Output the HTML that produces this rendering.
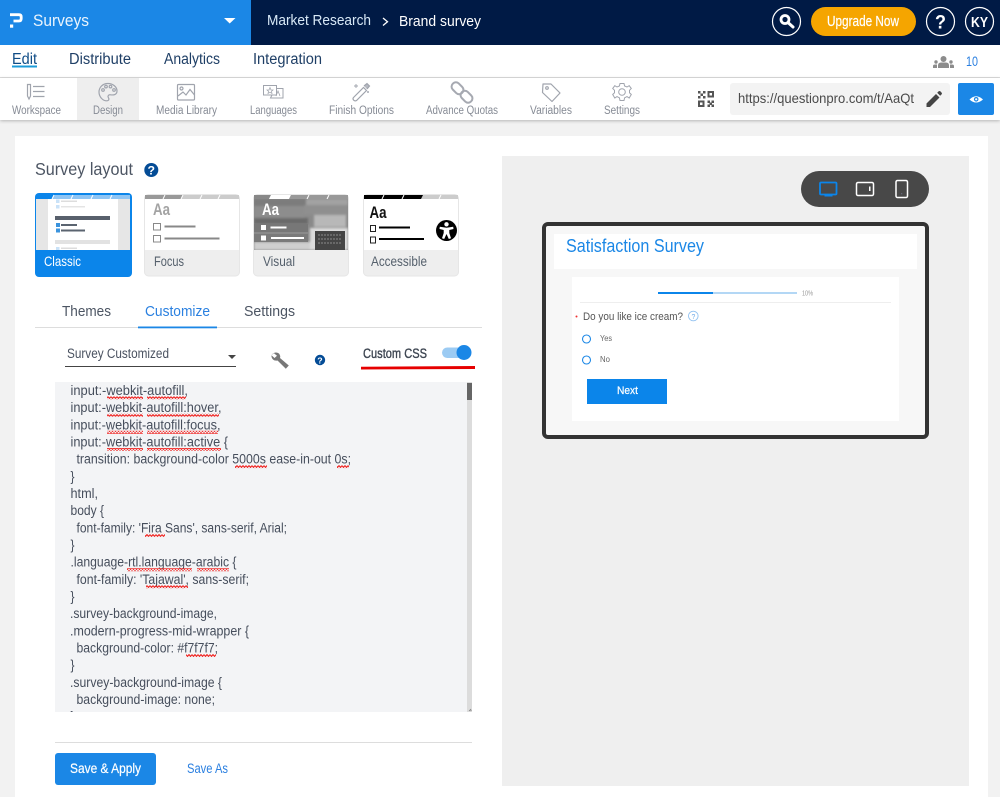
<!DOCTYPE html>
<html><head><meta charset="utf-8"><title>Surveys</title>
<style>
html,body{margin:0;padding:0;width:1000px;height:797px;overflow:hidden;background:#f2f2f2}
svg{display:block}
text{font-family:"Liberation Sans",sans-serif;white-space:pre}
.c text{font-size:13.5px;fill:#464e5c}
.t text{font-size:11.5px;fill:#868b95}
.i{fill:none;stroke:#a0a4ad;stroke-width:1.2}
</style></head><body>
<svg xmlns="http://www.w3.org/2000/svg" width="1000" height="797" viewBox="0 0 1000 797">
<defs>
<pattern id="w" width="6" height="3" patternUnits="userSpaceOnUse"><path d="M0 .6L1.5 2.4L3 .6L4.5 2.4L6 .6" fill="none" stroke="#f0221f" stroke-width="1.1"/></pattern>
<filter id="s" x="-5%" y="-20%" width="110%" height="150%"><feDropShadow dx="0" dy="1" stdDeviation="1.5" flood-color="#000" flood-opacity=".25"/></filter>
<filter id="b" x="-5%" y="-5%" width="110%" height="110%"><feGaussianBlur stdDeviation="1"/></filter>
<clipPath id="ta"><rect x="55" y="382" width="417" height="330"/></clipPath>
<clipPath id="vis"><rect x="254" y="199" width="94" height="51"/></clipPath>
</defs>
<rect width="1000" height="797" fill="#f2f2f2"/>
<!-- top bar -->
<rect width="251" height="45" fill="#1b87e6"/>
<rect x="251" width="749" height="45" fill="#001a45"/>
<path d="M10 14.700H19Q21.200 14.700 21.200 17V18.500Q21.200 21 19 21H13.500" fill="none" stroke="#fff" stroke-width="2.800"/>
<rect x="10" y="24.500" width="3.200" height="3.200" fill="#fff"/>
<text x="33" y="26" font-size="17" fill="#eaf4fd" textLength="56" lengthAdjust="spacingAndGlyphs">Surveys</text>
<path d="M224 18H235.500L229.700 23.500Z" fill="#fff"/>
<text x="267" y="25" font-size="15" fill="#d7e8f6" textLength="104" lengthAdjust="spacingAndGlyphs">Market Research</text>
<path d="M383 18L387.500 21.700L383 25.500" fill="none" stroke="#fff" stroke-width="1.300"/>
<text x="399" y="26" font-size="15" fill="#fff" textLength="82" lengthAdjust="spacingAndGlyphs">Brand survey</text>
<circle cx="786.500" cy="21.500" r="14" fill="none" stroke="#fff" stroke-width="1.200"/>
<circle cx="785" cy="19.500" r="4" fill="none" stroke="#fff" stroke-width="2.800"/>
<path d="M788.500 23L793 27" stroke="#fff" stroke-width="3" stroke-linecap="round"/>
<rect x="811" y="7" width="105" height="29" rx="14.500" fill="#f5a500"/>
<text x="827" y="26" font-size="14.500" fill="#fff" stroke="#fff" stroke-width=".2" textLength="72" lengthAdjust="spacingAndGlyphs">Upgrade Now</text>
<circle cx="940.500" cy="21.500" r="14" fill="none" stroke="#fff" stroke-width="1.200"/>
<text x="935" y="28.500" font-size="19" font-weight="700" fill="#fff" textLength="11" lengthAdjust="spacingAndGlyphs">?</text>
<circle cx="979.500" cy="21.500" r="14" fill="none" stroke="#fff" stroke-width="1.200"/>
<text x="971" y="27" font-size="15" font-weight="700" fill="#fff" textLength="17" lengthAdjust="spacingAndGlyphs">KY</text>
<!-- nav -->
<rect y="45" width="1000" height="32" fill="#fff"/>
<g font-size="15.500" fill="#1f3f66">
<text x="12" y="64" fill="#0f4c86" textLength="25" lengthAdjust="spacingAndGlyphs">Edit</text>
<text x="69" y="64" textLength="62" lengthAdjust="spacingAndGlyphs">Distribute</text>
<text x="164" y="64" textLength="56" lengthAdjust="spacingAndGlyphs">Analytics</text>
<text x="253" y="64" textLength="69" lengthAdjust="spacingAndGlyphs">Integration</text>
</g>
<rect x="12" y="65.500" width="25" height="2" fill="#1b9bd8"/>
<g fill="#8c8c8c">
<circle cx="943.500" cy="59" r="3"/><path d="M938 68V65.500Q938 62.500 941 62.500H946Q949 62.500 949 65.500V68Z"/>
<circle cx="936" cy="62" r="1.700"/><path d="M933 68V66Q933 64.500 935 64.500H937V68Z"/>
<circle cx="951" cy="62" r="1.700"/><path d="M954 68V66Q954 64.500 952 64.500H950V68Z"/>
</g>
<text x="966" y="66" font-size="13.500" fill="#2a7fe0" textLength="12" lengthAdjust="spacingAndGlyphs">10</text>
<rect y="77" width="1000" height="1.200" fill="#dcdcdc"/>
<!-- toolbar -->
<rect y="78" width="1000" height="42" fill="#fff" filter="url(#s)"/>
<rect x="77" y="78" width="62" height="42" fill="#eee"/>
<g class="t">
<text x="12" y="114" textLength="49" lengthAdjust="spacingAndGlyphs">Workspace</text>
<text x="93" y="114" textLength="30" lengthAdjust="spacingAndGlyphs">Design</text>
<text x="156" y="114" textLength="61" lengthAdjust="spacingAndGlyphs">Media Library</text>
<text x="250" y="114" textLength="47" lengthAdjust="spacingAndGlyphs">Languages</text>
<text x="329" y="114" textLength="65" lengthAdjust="spacingAndGlyphs">Finish Options</text>
<text x="426" y="114" textLength="72" lengthAdjust="spacingAndGlyphs">Advance Quotas</text>
<text x="530" y="114" textLength="42" lengthAdjust="spacingAndGlyphs">Variables</text>
<text x="604" y="114" textLength="36" lengthAdjust="spacingAndGlyphs">Settings</text>
</g>
<g class="i">
<path d="M27.500 84.500H30.500V96L29 99L27.500 96Z"/><path d="M33 86.500H44.500M33 91.500H44.500M33 96.500H44.500"/>
<path d="M108 83.500C102 83.500 99 88 99 92C99 97 103 101 107 100.800C109.500 100.600 109 98.500 108.300 97.500C107.500 96 108.500 94.500 110.500 94.800C114 95.300 117 94.500 117 91C117 87 113 83.500 108 83.500Z"/>
<circle cx="103" cy="90" r="1.300"/><circle cx="106" cy="86.600" r="1.300"/><circle cx="110.500" cy="86.600" r="1.300"/><circle cx="114" cy="90" r="1.300"/>
<rect x="177.500" y="84.500" width="17" height="15.500" rx="1"/><circle cx="181.500" cy="88.500" r="1.500"/><path d="M178 96L183 92L186 95L190 89.500L194.500 95"/>
<path d="M263.500 85.500H276.500V95H263.500Z" stroke-width="1"/><path d="M276.500 88.500H283V98H270.500L272 95" stroke-width="1"/><path d="M270 87.500L271 90H273L271.500 91.300L272 93.500L270 92.200L268 93.500L268.500 91.300L267 90H269Z" stroke-width=".7"/><path d="M276 96L278 91L280 96" stroke-width=".8"/>
<path d="M353.500 97.500L363.500 87.500L366.500 90.500L356.500 100.500Q355 101.500 353.500 100Q352.500 98.500 353.500 97.500Z"/><path d="M364 86L367 83.500L369.500 86L367 89" fill="#b5b8c0"/><path d="M356 84V88M354 86H358M368 91V93M367 92H369" stroke-width=".9"/>
<rect x="451" y="84" width="13" height="8.500" rx="4" transform="rotate(45 457.500 88.250)" stroke="#a6a9b1" stroke-width="2"/>
<rect x="460" y="92.500" width="13" height="8.500" rx="4" transform="rotate(45 466.500 96.750)" stroke="#a6a9b1" stroke-width="2"/>
<path d="M543 84H551L560 93L552 101.500L542.500 92.500Z" stroke-linejoin="round"/><circle cx="547" cy="88" r="1.300"/>
<path d="M620 83.500H624L624.600 86L627 87L629.200 85.700L631.300 88.500L629.500 90.300V92.800L631.300 94.500L629.200 98L627 96.600L624.600 97.800L624 100.500H620L619.400 97.800L617 96.600L614.800 98L612.700 94.500L614.500 92.800V90.300L612.700 88.500L614.800 85.700L617 87L619.400 86Z" stroke-width="1"/><circle cx="622" cy="92" r="3.300" stroke-width="1"/>
</g>
<!-- QR -->
<g fill="#555">
<rect x="698" y="91" width="2.500" height="2.500"/><rect x="703" y="91" width="2.500" height="2.500"/><rect x="700.500" y="93.500" width="2.500" height="2.500"/><rect x="698" y="96" width="2.500" height="2.500"/><rect x="703" y="96" width="2.500" height="2.500"/>
<path fill-rule="evenodd" d="M707.500 91H714V97.500H707.500ZM709.500 93V95.500H712V93Z"/>
<path fill-rule="evenodd" d="M698 100.500H704.500V107H698ZM700 102.500V105H702.500V102.500Z"/>
<rect x="707.500" y="100.500" width="2.500" height="2.500"/><rect x="711.500" y="100.500" width="2.500" height="2.500"/><rect x="709.500" y="102.500" width="2.500" height="2.500"/><rect x="707.500" y="104.500" width="2.500" height="2.500"/><rect x="711.500" y="104.500" width="2.500" height="2.500"/>
</g>
<rect x="730" y="83" width="220" height="32" rx="3" fill="#f3f3f3"/>
<text x="738" y="103" font-size="14" fill="#4a4a4a" textLength="176" lengthAdjust="spacingAndGlyphs">https://questionpro.com/t/AaQt</text>
<path d="M926.500 107V103.500L936 94L939.500 97.500L930 107ZM937.200 92.800L938.700 91.300Q939.500 90.700 940.300 91.300L941.700 92.700Q942.300 93.500 941.700 94.300L940.200 95.800Z" fill="#444"/>
<rect x="958" y="83" width="36" height="32" rx="2" fill="#1b87e6"/>
<path d="M969.500 99.500Q976 93 983 99.500Q976 105.500 969.500 99.500Z" fill="#fff"/><circle cx="976.200" cy="99.300" r="2.300" fill="#1b87e6"/><circle cx="976.200" cy="99.300" r="1.100" fill="#fff"/>
<!-- panel -->
<rect x="15" y="136" width="973" height="661" fill="#fff"/>
<rect x="502" y="156" width="467" height="630" fill="#efefef"/>
<text x="35" y="175" font-size="17.500" fill="#4c5563" textLength="98" lengthAdjust="spacingAndGlyphs">Survey layout</text>
<circle cx="151.300" cy="170" r="7" fill="#044c96"/>
<text x="147.500" y="174.500" font-size="11.500" font-weight="700" fill="#fff" textLength="7.500" lengthAdjust="spacingAndGlyphs">?</text>
<!-- Classic -->
<rect x="35" y="193" width="97" height="84" rx="4" fill="#0b85ea"/>
<rect x="36" y="195" width="94" height="55" fill="#e6e6e6"/>
<rect x="48" y="199" width="70" height="51" fill="#fff"/>
<path d="M36 195H130V199H36Z" fill="#8fc5f4"/>
<path d="M36 195H54L52 199H36Z" fill="#0b85ea"/>
<path d="M52 199L54 195M71 199L73 195M91 199L93 195M110 199L112 195" stroke="#fff" stroke-width="1"/>
<rect x="56" y="199.500" width="3.500" height="3.500" fill="#c9e2f8"/><rect x="61" y="200.500" width="16" height="1.500" fill="#ddd"/>
<rect x="56" y="205" width="3.500" height="3.500" fill="#c9e2f8"/><rect x="61" y="206" width="24" height="1.500" fill="#e4e4e4"/>
<rect x="55" y="216" width="55" height="4" fill="#58606c"/>
<rect x="56" y="223" width="4" height="4" fill="#3a93dd"/><rect x="61" y="224" width="16" height="2" fill="#5b6470"/>
<rect x="56" y="228.500" width="4" height="4" fill="#3a93dd"/><rect x="61" y="229.500" width="24" height="2" fill="#5b6470"/>
<rect x="55" y="240" width="55" height="4" fill="#e2e2e2"/>
<rect x="56" y="247" width="3.500" height="3" fill="#c9e2f8"/><rect x="61" y="247.500" width="16" height="1.500" fill="#ddd"/>
<text x="44" y="266" font-size="14" fill="#fff" textLength="37" lengthAdjust="spacingAndGlyphs">Classic</text>
<!-- Focus -->
<rect x="144.500" y="194.500" width="95" height="81.500" rx="4" fill="#eee" stroke="#e6e6e6"/>
<rect x="145" y="195" width="94" height="55" fill="#fff"/>
<rect x="145" y="195" width="94" height="4" fill="#ccc"/>
<path d="M145 195H183L181 199H145Z" fill="#999"/>
<path d="M163 199L165 195M181 199L183 195M200 199L202 195M218 199L220 195" stroke="#fff" stroke-width="1"/>
<text x="153" y="215" font-size="17" font-weight="700" fill="#a3a3a3" textLength="17" lengthAdjust="spacingAndGlyphs">Aa</text>
<rect x="153.500" y="223.500" width="7" height="6.500" fill="none" stroke="#888"/><rect x="164.500" y="225.500" width="31" height="2" fill="#888"/>
<rect x="153.500" y="235.500" width="7" height="6.500" fill="none" stroke="#888"/><rect x="164.500" y="237.500" width="55" height="2" fill="#888"/>
<text x="154" y="266" font-size="14" fill="#55606c" textLength="30" lengthAdjust="spacingAndGlyphs">Focus</text>
<!-- Visual -->
<rect x="253.500" y="194.500" width="95" height="81.500" rx="4" fill="#eee" stroke="#e6e6e6"/>
<rect x="254" y="195" width="94" height="4" fill="#ccc"/>
<path d="M254 195H271L269 199H254Z" fill="#888"/><path d="M271 195H291L289 199H269Z" fill="#fff"/><path d="M291 195H348V199H289Z" fill="#999"/>
<path d="M307 199L309 195M327 199L329 195" stroke="#fff" stroke-width="1"/>
<g clip-path="url(#vis)">
<rect x="254" y="199" width="94" height="51" fill="#8a8a8a"/>
<g filter="url(#b)">
<rect x="254" y="199" width="52" height="7" fill="#7c7c7c"/>
<rect x="306" y="199" width="42" height="6" fill="#a2a2a2"/>
<rect x="254" y="206" width="50" height="12" fill="#8d8d8d"/>
<rect x="304" y="205" width="44" height="10" fill="#8f8f8f"/>
<rect x="314" y="215" width="32" height="12" fill="#b8b8b8"/>
<rect x="254" y="218" width="54" height="6" fill="#6a6a6a"/>
<rect x="254" y="242" width="56" height="8" fill="#cfcfcf"/>
<rect x="310" y="228" width="38" height="22" fill="#dcdcdc"/>
</g>
<rect x="315" y="231" width="30" height="19" fill="#454545"/>
<path d="M318 235H341M318 239H341M318 243H341" stroke="#8a8a8a" stroke-width="1" stroke-dasharray="2 1"/>
<rect x="254" y="224" width="54" height="8" fill="#777"/>
<rect x="254" y="234" width="54" height="8" fill="#7a7a7a"/>
</g>
<text x="262" y="215" font-size="17" font-weight="700" fill="#fff" textLength="17" lengthAdjust="spacingAndGlyphs">Aa</text>
<rect x="261" y="225" width="5" height="5" fill="#fff"/><rect x="270.500" y="226.500" width="16" height="2" fill="#fff"/>
<rect x="261" y="235.500" width="5" height="5" fill="#fff"/><rect x="271" y="237" width="33" height="2" fill="#fff"/>
<text x="263" y="266" font-size="14" fill="#55606c" textLength="32" lengthAdjust="spacingAndGlyphs">Visual</text>
<!-- Accessible -->
<rect x="363.500" y="194.500" width="95" height="81.500" rx="4" fill="#eee" stroke="#e6e6e6"/>
<rect x="364" y="199" width="94" height="51" fill="#fff"/>
<rect x="364" y="195" width="94" height="4" fill="#ccc"/>
<path d="M364 195H423L421 199H364Z" fill="#000"/>
<path d="M382 199L384 195M402 199L404 195M439 199L441 195" stroke="#fff" stroke-width="1"/>
<text x="369.500" y="218" font-size="16.500" font-weight="700" fill="#111" textLength="17" lengthAdjust="spacingAndGlyphs">Aa</text>
<rect x="370.500" y="225.500" width="5" height="6" fill="none" stroke="#222"/><rect x="379" y="226.500" width="31" height="2" fill="#000"/>
<rect x="370.500" y="237" width="5" height="6" fill="none" stroke="#222"/><rect x="379" y="238" width="45" height="2" fill="#000"/>
<circle cx="446.500" cy="230.500" r="10.500" fill="#000"/>
<circle cx="446.500" cy="224.300" r="2.200" fill="#fff"/>
<path d="M439.800 226.800L446.500 227.800L453.200 226.800L453.500 229L449.300 230V233L451 238.300L448.800 239L446.500 234L444.200 239L442 238.300L443.700 233V230L439.500 229Z" fill="#fff"/>
<text x="371" y="266" font-size="14" fill="#55606c" textLength="56" lengthAdjust="spacingAndGlyphs">Accessible</text>
<!-- tabs -->
<g font-size="15">
<text x="62" y="316" fill="#4c5563" textLength="49" lengthAdjust="spacingAndGlyphs">Themes</text>
<text x="145" y="316" fill="#2a80e0" textLength="65" lengthAdjust="spacingAndGlyphs">Customize</text>
<text x="244" y="316" fill="#4c5563" textLength="51" lengthAdjust="spacingAndGlyphs">Settings</text>
</g>
<rect x="35" y="327" width="447" height="1" fill="#ddd"/>
<rect x="138" y="326.500" width="79" height="1.800" fill="#1b87e6"/>
<!-- select row -->
<text x="67" y="358" font-size="13.500" fill="#4a5260" textLength="102" lengthAdjust="spacingAndGlyphs">Survey Customized</text>
<rect x="65" y="366" width="171" height="1" fill="#444"/>
<path d="M228 355H236L232 359Z" fill="#444"/>
<path d="M271.500 355Q275 351 279 353.500Q280.800 356 280 358L288.800 365.500L285.800 368.800L277.500 360.500Q274.500 361 273 359.500Q271.200 357.500 271.500 355.200L274.500 358L277 355.800L274 353.200Z" fill="#777"/>
<circle cx="320" cy="360" r="5.200" fill="#044c96"/>
<text x="317.300" y="363.300" font-size="8.500" font-weight="700" fill="#fff" textLength="5.400" lengthAdjust="spacingAndGlyphs">?</text>
<text x="363" y="358" font-size="13.500" fill="#3c4450" textLength="64" lengthAdjust="spacingAndGlyphs" stroke="#3c4450" stroke-width=".35">Custom CSS</text>
<rect x="442" y="347.500" width="28" height="10.500" rx="5.200" fill="#9ccbf3"/>
<circle cx="464" cy="352.500" r="7.500" fill="#1b87e6"/>
<path d="M361 366.800L475 366V369L361 369.500Z" fill="#e60000"/>
<!-- code -->
<rect x="55" y="382" width="417" height="330" fill="#f3f4f6"/>
<rect x="467" y="382" width="5" height="330" fill="#dcdcdc"/>
<rect x="467" y="383" width="5" height="17" fill="#666"/>
<g clip-path="url(#ta)">
<g class="c">
<text x="70.500" y="395" textLength="117.500" lengthAdjust="spacingAndGlyphs">input:-webkit-autofill,</text>
<text x="70.500" y="412.200" textLength="151" lengthAdjust="spacingAndGlyphs">input:-webkit-autofill:hover,</text>
<text x="70.500" y="429.300" textLength="150" lengthAdjust="spacingAndGlyphs">input:-webkit-autofill:focus,</text>
<text x="70.500" y="446.500" textLength="157.500" lengthAdjust="spacingAndGlyphs">input:-webkit-autofill:active {</text>
<text x="76.500" y="463.700" textLength="274.500" lengthAdjust="spacingAndGlyphs">transition: background-color 5000s ease-in-out 0s;</text>
<text x="70.500" y="480.900" textLength="4" lengthAdjust="spacingAndGlyphs">}</text>
<text x="70.500" y="498" textLength="27.500" lengthAdjust="spacingAndGlyphs">html,</text>
<text x="70.500" y="515.200" textLength="33.500" lengthAdjust="spacingAndGlyphs">body {</text>
<text x="76.500" y="532.400" textLength="210.500" lengthAdjust="spacingAndGlyphs">font-family: 'Fira Sans', sans-serif, Arial;</text>
<text x="70.500" y="549.500" textLength="4" lengthAdjust="spacingAndGlyphs">}</text>
<text x="70.500" y="566.700" textLength="166" lengthAdjust="spacingAndGlyphs">.language-rtl.language-arabic {</text>
<text x="76.500" y="583.900" textLength="172.500" lengthAdjust="spacingAndGlyphs">font-family: 'Tajawal', sans-serif;</text>
<text x="70.500" y="601" textLength="4" lengthAdjust="spacingAndGlyphs">}</text>
<text x="70" y="618.200" textLength="147" lengthAdjust="spacingAndGlyphs">.survey-background-image,</text>
<text x="70" y="635.400" textLength="179" lengthAdjust="spacingAndGlyphs">.modern-progress-mid-wrapper {</text>
<text x="76.500" y="652.500" textLength="141.500" lengthAdjust="spacingAndGlyphs">background-color: #f7f7f7;</text>
<text x="70.500" y="669.700" textLength="4" lengthAdjust="spacingAndGlyphs">}</text>
<text x="70" y="686.900" textLength="152" lengthAdjust="spacingAndGlyphs">.survey-background-image {</text>
<text x="76.500" y="704" textLength="138.500" lengthAdjust="spacingAndGlyphs">background-image: none;</text>
<text x="70.500" y="721.200" textLength="4" lengthAdjust="spacingAndGlyphs">}</text>
</g>
<g fill="url(#w)">
<rect x="107" y="396.500" width="36" height="3"/><rect x="147" y="396.500" width="39" height="3"/>
<rect x="107" y="413.700" width="36" height="3"/><rect x="147" y="413.700" width="72" height="3"/>
<rect x="107" y="430.800" width="36" height="3"/><rect x="147" y="430.800" width="71" height="3"/>
<rect x="107" y="448" width="36" height="3"/><rect x="147" y="448" width="74" height="3"/>
<rect x="235" y="465.200" width="32" height="3"/><rect x="337" y="465.200" width="12" height="3"/>
<rect x="145" y="533.900" width="20" height="3"/>
<rect x="127" y="568.200" width="65" height="3"/><rect x="197" y="568.200" width="32" height="3"/>
<rect x="146" y="585.400" width="42" height="3"/>
<rect x="186" y="654" width="30" height="3"/>
</g>
</g>
<path d="M469 711L471 709M470.500 711L471.500 710" stroke="#777" stroke-width=".6"/>
<!-- bottom -->
<rect x="55" y="742" width="417" height="1" fill="#ddd"/>
<rect x="55" y="753" width="101" height="32" rx="3" fill="#1b87e6"/>
<text x="70" y="773" font-size="13.500" fill="#fff" stroke="#fff" stroke-width=".2" textLength="71" lengthAdjust="spacingAndGlyphs">Save &amp; Apply</text>
<text x="187" y="773" font-size="13.500" fill="#2a7fe0" textLength="41" lengthAdjust="spacingAndGlyphs">Save As</text>
<!-- preview -->
<rect x="801" y="171" width="128" height="36" rx="18" fill="#484848"/>
<rect x="820" y="182.500" width="16.500" height="12" rx="1" fill="none" stroke="#0b85ea" stroke-width="1.800"/>
<rect x="824.500" y="195" width="8" height="1.500" fill="#0b85ea"/>
<rect x="856.500" y="182.500" width="17" height="13" rx="1.500" fill="none" stroke="#fff" stroke-width="1.500"/>
<rect x="869" y="186.500" width="1.500" height="4.500" fill="#fff"/>
<rect x="896" y="180.500" width="11.500" height="17" rx="1.500" fill="none" stroke="#fff" stroke-width="1.500"/>
<rect x="901" y="193" width="1.300" height="1.300" fill="#667"/>
<rect x="544" y="224" width="383" height="213" rx="4" fill="#f7f7f7" stroke="#333" stroke-width="4"/>
<rect x="554" y="234" width="363" height="35" fill="#fff"/>
<text x="566" y="252" font-size="18" fill="#1b87e6" textLength="138" lengthAdjust="spacingAndGlyphs">Satisfaction Survey</text>
<rect x="572" y="277" width="327" height="144" fill="#fff"/>
<rect x="658" y="292" width="55" height="2" fill="#0b85ea"/>
<rect x="713" y="292" width="84" height="2" fill="#b3d7f5"/>
<text x="802" y="295.500" font-size="7" fill="#999" textLength="11" lengthAdjust="spacingAndGlyphs">10%</text>
<rect x="580" y="302" width="311" height="1" fill="#eee"/>
<circle cx="576.500" cy="316.500" r="1" fill="#f03030"/>
<text x="583" y="320" font-size="11" fill="#555" textLength="100" lengthAdjust="spacingAndGlyphs">Do you like ice cream?</text>
<circle cx="693.300" cy="316" r="4.800" fill="none" stroke="#8fc0f0" stroke-width=".9"/>
<text x="691.500" y="318.800" font-size="7.500" fill="#6aa8e8" textLength="3.800" lengthAdjust="spacingAndGlyphs">?</text>
<circle cx="586.500" cy="339" r="4" fill="none" stroke="#1b87e6" stroke-width="1.100"/>
<circle cx="586.500" cy="360" r="4" fill="none" stroke="#1b87e6" stroke-width="1.100"/>
<text x="600" y="341" font-size="8" fill="#666" textLength="12" lengthAdjust="spacingAndGlyphs">Yes</text>
<text x="600" y="362" font-size="8" fill="#666" textLength="10" lengthAdjust="spacingAndGlyphs">No</text>
<rect x="587" y="379" width="80" height="25" fill="#0b85ea"/>
<text x="617" y="394" font-size="11" fill="#fff" textLength="21" lengthAdjust="spacingAndGlyphs" stroke="#fff" stroke-width=".2">Next</text>
</svg>
</body></html>
